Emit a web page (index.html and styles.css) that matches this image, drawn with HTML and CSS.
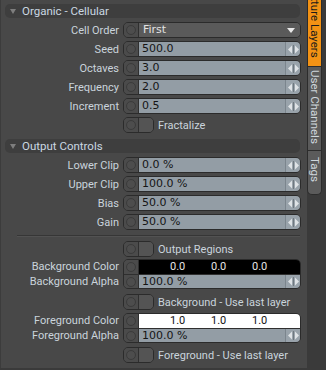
FILE: index.html
```html
<!DOCTYPE html>
<html>
<head>
<meta charset="utf-8">
<link rel="stylesheet" href="styles.css">
</head>
<body>
<div class="app">
  <div class="panel">
    <div class="hdr"><span class="tri"></span>Organic - Cellular</div>
    <div class="rows">
      <div class="row"><div class="lbl">Cell Order</div><div class="ctl"><span class="dot"><i></i></span><div class="dd">First<span class="caret"></span></div></div></div>
      <div class="row"><div class="lbl">Seed</div><div class="ctl"><span class="dot"><i></i></span><div class="val">500.0</div><span class="arr"><svg width="11" height="9" viewBox="0 0 11 9"><path d="M0 4.5L4 0.5V8.5Z M7 0.5L11 4.5L7 8.5Z" fill="#dfe3e6"/><rect x="5" y="0" width="1" height="9" fill="#6f787f"/></svg></span></div></div>
      <div class="row"><div class="lbl">Octaves</div><div class="ctl"><span class="dot"><i></i></span><div class="val">3.0</div><span class="arr"><svg width="11" height="9" viewBox="0 0 11 9"><path d="M0 4.5L4 0.5V8.5Z M7 0.5L11 4.5L7 8.5Z" fill="#dfe3e6"/><rect x="5" y="0" width="1" height="9" fill="#6f787f"/></svg></span></div></div>
      <div class="row"><div class="lbl">Frequency</div><div class="ctl"><span class="dot"><i></i></span><div class="val">2.0</div><span class="arr"><svg width="11" height="9" viewBox="0 0 11 9"><path d="M0 4.5L4 0.5V8.5Z M7 0.5L11 4.5L7 8.5Z" fill="#dfe3e6"/><rect x="5" y="0" width="1" height="9" fill="#6f787f"/></svg></span></div></div>
      <div class="row"><div class="lbl">Increment</div><div class="ctl"><span class="dot"><i></i></span><div class="val">0.5</div><span class="arr"><svg width="11" height="9" viewBox="0 0 11 9"><path d="M0 4.5L4 0.5V8.5Z M7 0.5L11 4.5L7 8.5Z" fill="#dfe3e6"/><rect x="5" y="0" width="1" height="9" fill="#6f787f"/></svg></span></div></div>
      <div class="row"><div class="lbl"></div><div class="chk"><span class="dot"><i></i></span><span class="box"></span></div><span class="chk-text">Fractalize</span></div>
    </div>

    <div class="hdr hdr2"><span class="tri"></span>Output Controls</div>
    <div class="rows">
      <div class="row"><div class="lbl">Lower Clip</div><div class="ctl"><span class="dot"><i></i></span><div class="val">0.0 %</div><span class="arr"><svg width="11" height="9" viewBox="0 0 11 9"><path d="M0 4.5L4 0.5V8.5Z M7 0.5L11 4.5L7 8.5Z" fill="#dfe3e6"/><rect x="5" y="0" width="1" height="9" fill="#6f787f"/></svg></span></div></div>
      <div class="row"><div class="lbl">Upper Clip</div><div class="ctl"><span class="dot"><i></i></span><div class="val">100.0 %</div><span class="arr"><svg width="11" height="9" viewBox="0 0 11 9"><path d="M0 4.5L4 0.5V8.5Z M7 0.5L11 4.5L7 8.5Z" fill="#dfe3e6"/><rect x="5" y="0" width="1" height="9" fill="#6f787f"/></svg></span></div></div>
      <div class="row"><div class="lbl">Bias</div><div class="ctl"><span class="dot"><i></i></span><div class="val">50.0 %</div><span class="arr"><svg width="11" height="9" viewBox="0 0 11 9"><path d="M0 4.5L4 0.5V8.5Z M7 0.5L11 4.5L7 8.5Z" fill="#dfe3e6"/><rect x="5" y="0" width="1" height="9" fill="#6f787f"/></svg></span></div></div>
      <div class="row"><div class="lbl">Gain</div><div class="ctl"><span class="dot"><i></i></span><div class="val">50.0 %</div><span class="arr"><svg width="11" height="9" viewBox="0 0 11 9"><path d="M0 4.5L4 0.5V8.5Z M7 0.5L11 4.5L7 8.5Z" fill="#dfe3e6"/><rect x="5" y="0" width="1" height="9" fill="#6f787f"/></svg></span></div></div>
    </div>

    <div class="sep"></div>

    <div class="row"><div class="lbl"></div><div class="chk"><span class="dot"><i></i></span><span class="box"></span></div><span class="chk-text">Output Regions</span></div>

    <div class="cgroup g-bg">
      <div class="clabels"><div class="lbl">Background Color</div><div class="lbl">Background Alpha</div></div>
      <div class="ctl2">
        <div class="sub sub1"><span class="dot"><i></i></span><div class="swatch black"><span>0.0</span><span>0.0</span><span>0.0</span></div></div>
        <div class="sub sub2"><span class="dot"><i></i></span><div class="val">100.0 %</div><span class="arr"><svg width="11" height="9" viewBox="0 0 11 9"><path d="M0 4.5L4 0.5V8.5Z M7 0.5L11 4.5L7 8.5Z" fill="#dfe3e6"/><rect x="5" y="0" width="1" height="9" fill="#6f787f"/></svg></span></div>
      </div>
    </div>

    <div class="row r-bgchk"><div class="lbl"></div><div class="chk"><span class="dot"><i></i></span><span class="box"></span></div><span class="chk-text">Background - Use last layer</span></div>

    <div class="cgroup g-fg">
      <div class="clabels"><div class="lbl">Foreground Color</div><div class="lbl">Foreground Alpha</div></div>
      <div class="ctl2">
        <div class="sub sub1"><span class="dot"><i></i></span><div class="swatch white"><span>1.0</span><span>1.0</span><span>1.0</span></div></div>
        <div class="sub sub2"><span class="dot"><i></i></span><div class="val">100.0 %</div><span class="arr"><svg width="11" height="9" viewBox="0 0 11 9"><path d="M0 4.5L4 0.5V8.5Z M7 0.5L11 4.5L7 8.5Z" fill="#dfe3e6"/><rect x="5" y="0" width="1" height="9" fill="#6f787f"/></svg></span></div>
      </div>
    </div>

    <div class="row r-fgchk"><div class="lbl"></div><div class="chk"><span class="dot"><i></i></span><span class="box"></span></div><span class="chk-text">Foreground - Use last layer</span></div>
  </div>

  <div class="tabs">
    <div class="tab tab-active"><span>Texture Layers</span></div>
    <div class="tab tab-user"><span>User Channels</span></div>
    <div class="tab tab-tags"><span>Tags</span></div>
  </div>
</div>
</body>
</html>
```

FILE: styles.css
```css
* { box-sizing: border-box; }
html, body { margin: 0; padding: 0; }
body {
  width: 326px;
  height: 370px;
  background: #484848;
  font-family: Roboto, "Liberation Sans", sans-serif;
  font-size: 11px;
  color: #cad4dc;
  overflow: hidden;
}
.app {
  display: flex;
  width: 326px;
  height: 368px;
  border-bottom: 2px solid #3a3a3a;
  box-sizing: content-box;
}
.panel {
  width: 306px;
  border-left: 1px solid #3c3c3c;
  padding-top: 4px;
}
.hdr {
  display: flex;
  align-items: center;
  height: 14px;
  margin: 0 6px 4px 4px;
  background: #3e3e3e;
  border-radius: 5px;
  padding-left: 5px;
  color: #cbd8e2;
  font-size: 11.5px;
}
.hdr2 { margin-top: 6px; }
.tri {
  width: 0; height: 0;
  border-left: 3px solid transparent;
  border-right: 3px solid transparent;
  border-top: 5px solid #7e7e7e;
  margin-right: 6px;
}
.rows { display: flex; flex-direction: column; gap: 3px; }
.row { display: flex; align-items: center; height: 16px; }
.lbl {
  width: 122px;
  padding-right: 4px;
  text-align: right;
  white-space: nowrap;
}
.ctl {
  display: flex;
  width: 178px;
  height: 16px;
  border: 1px solid #2b2b2b;
  border-radius: 5px;
  overflow: hidden;
  background: #4a4a4a;
}
.dot {
  width: 15px;
  flex: none;
  display: flex;
  align-items: center;
  justify-content: center;
  background: #4b4b4b;
  border-right: 1px solid #2f2f2f;
}
.dot i {
  display: block;
  width: 10px;
  height: 10px;
  border-radius: 50%;
  border: 1px solid #3b3b3b;
  background: #4d4d4d;
}
.val, .dd {
  font-family: "DejaVu Sans", Verdana, sans-serif;
  font-size: 11px;
}
.val {
  flex: 1;
  background: #939da5;
  color: #151515;
  padding-left: 3px;
  line-height: 14px;
}
.arr {
  width: 15px;
  flex: none;
  background: #99a3ab;
  border-left: 1px solid #7b858d;
  display: flex;
  align-items: center;
  justify-content: center;
}
.dd {
  flex: 1;
  background: #5a5a5a;
  color: #e2e2e2;
  padding-left: 4px;
  line-height: 14px;
  display: flex;
  justify-content: space-between;
  align-items: center;
}
.caret {
  width: 0; height: 0;
  border-left: 4px solid transparent;
  border-right: 4px solid transparent;
  border-top: 5px solid #e8e8e8;
  margin-right: 5px;
}
.chk {
  display: flex;
  width: 31px;
  height: 16px;
  border: 1px solid #2b2b2b;
  border-radius: 5px;
  overflow: hidden;
}
.chk .box { flex: 1; background: #545454; }
.chk-text { margin-left: 4px; white-space: nowrap; }
.sep {
  height: 1px;
  background: #363636;
  margin: 5px 6px 5px 16px;
  box-shadow: 0 1px 0 #525252;
}
.cgroup { display: flex; margin-top: 2px; }
.clabels { display: flex; flex-direction: column; }
.clabels .lbl { height: 15px; line-height: 15px; }
.ctl2 {
  width: 178px;
  border: 1px solid #2b2b2b;
  border-radius: 5px;
  overflow: hidden;
  display: flex;
  flex-direction: column;
}
.sub { display: flex; }
.sub1 { height: 15px; border-bottom: 1px solid #2f2f2f; }
.sub2 { height: 13px; }
.swatch {
  flex: 1;
  display: flex;
  padding-left: 31px;
  line-height: 14px;
  font-size: 11px;
}
.swatch span { width: 41px; }
.black { background: #000; color: #e6e6e6; }
.white { background: #fff; color: #111; }
.sub2 .val { line-height: 13px; }
.r-bgchk { margin-top: 5px; }
.g-fg { margin-top: 3px; }
.r-fgchk { margin-top: 4px; }

.tabs {
  width: 20px;
  display: flex;
  flex-direction: column;
  background: linear-gradient(to right, #484848 0 1px, #3a3a3a 1px);
}
.tab {
  writing-mode: vertical-rl;
  margin-left: 1px;
  width: 15px;
  border: 1px solid #2c2c2c;
  border-top: none;
  background: #5b5b5b;
  color: #cfd6dc;
  display: flex;
  align-items: center;
  font-size: 11.5px;
  line-height: 13px;
  white-space: nowrap;
}
.tab-active {
  height: 67px;
  background: #f39214;
  color: #1a1a1a;
  justify-content: flex-end;
  padding-bottom: 8px;
  overflow: hidden;
}
.tab-user {
  height: 84px;
  padding-top: 3px;
}
.tab-tags {
  height: 44px;
  padding-top: 6px;
  border-radius: 0 0 5px 5px;
}
```
